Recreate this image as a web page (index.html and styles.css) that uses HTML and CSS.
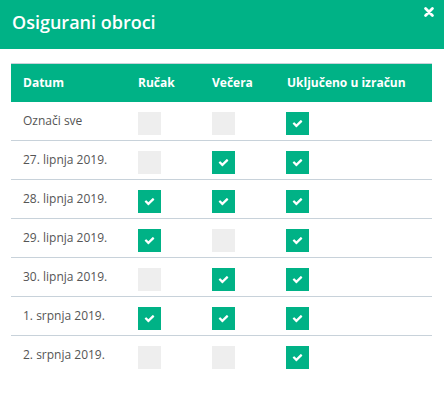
FILE: index.html
```html
<!DOCTYPE html>
<html>
<head>
<meta charset="utf-8">
<link rel="stylesheet" href="styles.css">
</head>
<body>
<div class="modal">
  <div class="modal-header">
    <h4 class="modal-title">Osigurani obroci</h4>
    <span class="close">
      <svg width="10" height="10" viewBox="0 0 10 10"><path d="M1.6 1.6 L8.4 8.4 M8.4 1.6 L1.6 8.4" stroke="#fff" stroke-width="2.8" stroke-linecap="round"/></svg>
    </span>
  </div>
  <div class="modal-body">
    <table class="meals">
      <thead>
        <tr>
          <th class="c-date">Datum</th>
          <th class="c-lunch">Ručak</th>
          <th class="c-dinner">Večera</th>
          <th class="c-inc">Uključeno u izračun</th>
        </tr>
      </thead>
      <tbody>
        <tr><td>Označi sve</td><td><span class="cb"></span></td><td><span class="cb"></span></td><td><span class="cb on"><svg viewBox="0 0 1792 1792"><path d="M1671 566q0 40-28 68l-724 724-136 136q-28 28-68 28t-68-28l-136-136-362-362q-28-28-28-68t28-68l136-136q28-28 68-28t68 28l294 295 656-657q28-28 68-28t68 28l136 136q28 28 28 68z"/></svg></span></td></tr>
        <tr><td>27. lipnja 2019.</td><td><span class="cb"></span></td><td><span class="cb on"><svg viewBox="0 0 1792 1792"><path d="M1671 566q0 40-28 68l-724 724-136 136q-28 28-68 28t-68-28l-136-136-362-362q-28-28-28-68t28-68l136-136q28-28 68-28t68 28l294 295 656-657q28-28 68-28t68 28l136 136q28 28 28 68z"/></svg></span></td><td><span class="cb on"><svg viewBox="0 0 1792 1792"><path d="M1671 566q0 40-28 68l-724 724-136 136q-28 28-68 28t-68-28l-136-136-362-362q-28-28-28-68t28-68l136-136q28-28 68-28t68 28l294 295 656-657q28-28 68-28t68 28l136 136q28 28 28 68z"/></svg></span></td></tr>
        <tr><td>28. lipnja 2019.</td><td><span class="cb on"><svg viewBox="0 0 1792 1792"><path d="M1671 566q0 40-28 68l-724 724-136 136q-28 28-68 28t-68-28l-136-136-362-362q-28-28-28-68t28-68l136-136q28-28 68-28t68 28l294 295 656-657q28-28 68-28t68 28l136 136q28 28 28 68z"/></svg></span></td><td><span class="cb on"><svg viewBox="0 0 1792 1792"><path d="M1671 566q0 40-28 68l-724 724-136 136q-28 28-68 28t-68-28l-136-136-362-362q-28-28-28-68t28-68l136-136q28-28 68-28t68 28l294 295 656-657q28-28 68-28t68 28l136 136q28 28 28 68z"/></svg></span></td><td><span class="cb on"><svg viewBox="0 0 1792 1792"><path d="M1671 566q0 40-28 68l-724 724-136 136q-28 28-68 28t-68-28l-136-136-362-362q-28-28-28-68t28-68l136-136q28-28 68-28t68 28l294 295 656-657q28-28 68-28t68 28l136 136q28 28 28 68z"/></svg></span></td></tr>
        <tr><td>29. lipnja 2019.</td><td><span class="cb on"><svg viewBox="0 0 1792 1792"><path d="M1671 566q0 40-28 68l-724 724-136 136q-28 28-68 28t-68-28l-136-136-362-362q-28-28-28-68t28-68l136-136q28-28 68-28t68 28l294 295 656-657q28-28 68-28t68 28l136 136q28 28 28 68z"/></svg></span></td><td><span class="cb"></span></td><td><span class="cb on"><svg viewBox="0 0 1792 1792"><path d="M1671 566q0 40-28 68l-724 724-136 136q-28 28-68 28t-68-28l-136-136-362-362q-28-28-28-68t28-68l136-136q28-28 68-28t68 28l294 295 656-657q28-28 68-28t68 28l136 136q28 28 28 68z"/></svg></span></td></tr>
        <tr><td>30. lipnja 2019.</td><td><span class="cb"></span></td><td><span class="cb on"><svg viewBox="0 0 1792 1792"><path d="M1671 566q0 40-28 68l-724 724-136 136q-28 28-68 28t-68-28l-136-136-362-362q-28-28-28-68t28-68l136-136q28-28 68-28t68 28l294 295 656-657q28-28 68-28t68 28l136 136q28 28 28 68z"/></svg></span></td><td><span class="cb on"><svg viewBox="0 0 1792 1792"><path d="M1671 566q0 40-28 68l-724 724-136 136q-28 28-68 28t-68-28l-136-136-362-362q-28-28-28-68t28-68l136-136q28-28 68-28t68 28l294 295 656-657q28-28 68-28t68 28l136 136q28 28 28 68z"/></svg></span></td></tr>
        <tr><td>1. srpnja 2019.</td><td><span class="cb on"><svg viewBox="0 0 1792 1792"><path d="M1671 566q0 40-28 68l-724 724-136 136q-28 28-68 28t-68-28l-136-136-362-362q-28-28-28-68t28-68l136-136q28-28 68-28t68 28l294 295 656-657q28-28 68-28t68 28l136 136q28 28 28 68z"/></svg></span></td><td><span class="cb on"><svg viewBox="0 0 1792 1792"><path d="M1671 566q0 40-28 68l-724 724-136 136q-28 28-68 28t-68-28l-136-136-362-362q-28-28-28-68t28-68l136-136q28-28 68-28t68 28l294 295 656-657q28-28 68-28t68 28l136 136q28 28 28 68z"/></svg></span></td><td><span class="cb on"><svg viewBox="0 0 1792 1792"><path d="M1671 566q0 40-28 68l-724 724-136 136q-28 28-68 28t-68-28l-136-136-362-362q-28-28-28-68t28-68l136-136q28-28 68-28t68 28l294 295 656-657q28-28 68-28t68 28l136 136q28 28 28 68z"/></svg></span></td></tr>
        <tr><td>2. srpnja 2019.</td><td><span class="cb"></span></td><td><span class="cb"></span></td><td><span class="cb on"><svg viewBox="0 0 1792 1792"><path d="M1671 566q0 40-28 68l-724 724-136 136q-28 28-68 28t-68-28l-136-136-362-362q-28-28-28-68t28-68l136-136q28-28 68-28t68 28l294 295 656-657q28-28 68-28t68 28l136 136q28 28 28 68z"/></svg></span></td></tr>
      </tbody>
    </table>
  </div>
</div>
</body>
</html>
```
FILE: styles.css
```css
* { box-sizing: border-box; }
html, body { margin: 0; padding: 0; background: #fff; }
body { font-family: "Open Sans", "Liberation Sans", sans-serif; color: #555; }

.modal { width: 444px; }

.modal-header {
  background: #00b286;
  height: 49px;
  display: flex;
  align-items: flex-start;
  justify-content: space-between;
  padding: 0 10px 0 12px;
}
.modal-title {
  margin: 0;
  padding-top: 10px;
  font-size: 18px;
  font-weight: 600;
  line-height: 24px;
  color: #fff;
}
.close {
  display: flex;
  padding-top: 7px;
  line-height: 0;
}

.modal-body { padding: 14px 12px 0 11px; }

.meals {
  width: 421px;
  border-collapse: collapse;
  border-top: 1px solid #c8d2da;
  table-layout: fixed;
}
.meals th, .meals td {
  text-align: left;
  vertical-align: top;
  padding: 10px 0 0 12px;
  font-size: 12px;
  line-height: 18px;
}
.meals th {
  background: #00b286;
  color: #fff;
  font-weight: 700;
  height: 38px;
}
.meals td { height: 39px; }
.meals tbody tr { border-bottom: 1px solid #c8d2da; }
.meals tbody tr:last-child { border-bottom: none; }

.c-date { width: 115px; }
.c-lunch { width: 74px; }
.c-dinner { width: 75px; }
.c-inc { width: 157px; }

.cb {
  display: flex;
  align-items: center;
  justify-content: center;
  width: 23px;
  height: 23px;
  background: #eeeeee;
}
.cb.on { background: #00b286; }
.cb svg { width: 11px; height: 11px; fill: #fff; }
.meals td:last-child .cb { margin-left: -1px; }
```
